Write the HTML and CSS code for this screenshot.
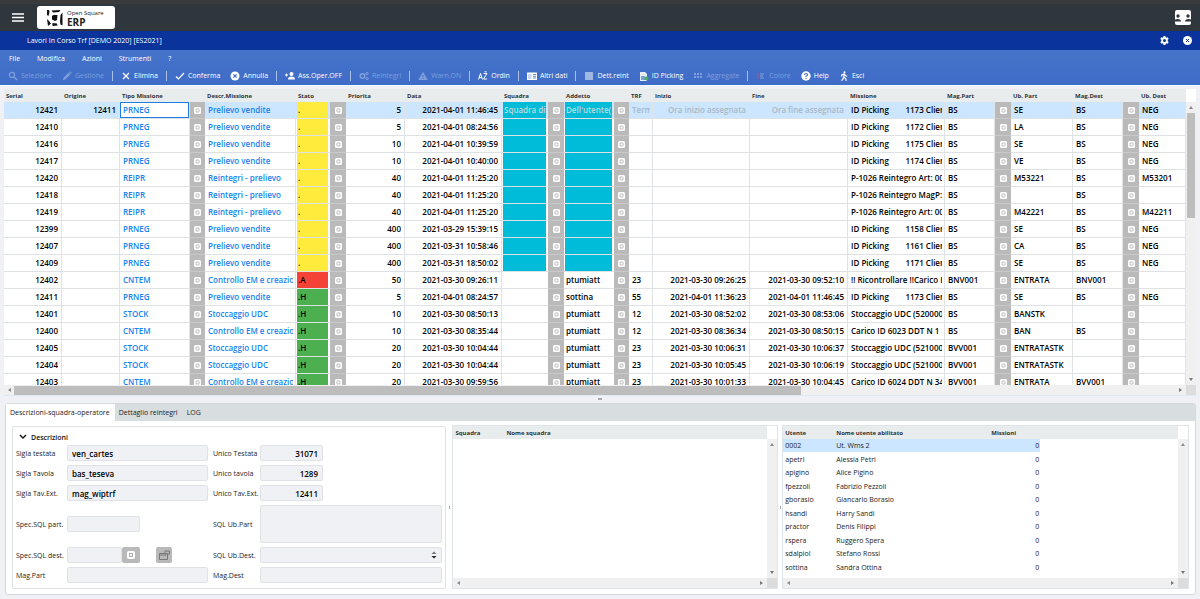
FILE: index.html
```html
<!DOCTYPE html>
<html lang="it">
<head>
  <meta charset="UTF-8" />
  <meta name="viewport" content="width=device-width, initial-scale=1.0" />
  <title>Lavori In Corso Trf</title>
  <link rel="stylesheet" href="styles.css">
</head>
<body>
  <!-- App bar -->
  <header class="app-bar">
    <button class="icon-btn" aria-label="Menu">
      <svg width="12" height="9" viewBox="0 0 12 9"><path d="M0 1h12M0 4.5h12M0 8h12" stroke="#fff" stroke-width="1.6"/></svg>
    </button>
    <div class="logo">
      <svg width="18" height="18" viewBox="0 0 18 18" fill="#111">
        <path d="M1 1h2L3.500 3 2.500 7 1 6zM1 10l2 2 2 2.500-3 2.500zM5.500 1.500L14.500 1 13 3l-6 .5zM6 7l1.500-1L11.500 6l-.5 5L9 12 6 10.500zM6.500 14l4.500.5.5 2-5 .5zM14.500 6l2-2.500v13l-2-1-.5-3z"/>
      </svg>
      <div class="logo-text">
        <span>Open Square</span>
        <strong>ERP</strong>
      </div>
    </div>
    <button class="icon-btn right" aria-label="Utenti">
      <svg width="18" height="16" viewBox="0 0 18 16">
        <rect x="1" width="16" height="15" rx="2" fill="#fff"/>
        <g fill="#2f373d"><circle cx="4" cy="6" r="1.7"/><circle cx="14" cy="6" r="1.7"/><path d="M0 11.5q0-2.5 3.500-2.500t3.500 2.500zM11 11.500q0-2.500 3.500-2.500t3.500 2.500z"/></g>
      </svg>
    </button>
  </header>

  <div class="title-bar">
    <h1>Lavori In Corso Trf [DEMO 2020] [ES2021]</h1>
    <button class="icon-btn" aria-label="Impostazioni">
      <svg width="9" height="9" viewBox="0 0 24 24" fill="#fff"><path fill-rule="evenodd" d="M9.500 0h5l.7 3.500 2 1.200L20.600 3.500l2.500 4.300L20.500 10.200v3.600l2.600 2.400-2.500 4.300-3.400-1.200-2 1.200-.7 3.500h-5l-.7-3.500-2-1.200-3.400 1.200L.9 16.200l2.600-2.400v-3.600L.9 7.800l2.500-4.300 3.400 1.200 2-1.200zM12 8a4 4 0 1 0 0 8 4 4 0 0 0 0-8z"/></svg>
    </button>
    <button class="icon-btn" aria-label="Chiudi">
      <svg width="9" height="9" viewBox="0 0 9 9"><circle cx="4.500" cy="4.500" r="4.500" fill="#fff"/><path d="M3 3l3 3M6 3L3 6" stroke="#0a349c" stroke-width="1"/></svg>
    </button>
  </div>

  <div class="command-bar">
    <nav class="menu">
      <button>File</button>
      <button>Modifica</button>
      <button>Azioni</button>
      <button>Strumenti</button>
      <button>?</button>
    </nav>
    <div class="toolbar">
      <button disabled><svg viewBox="0 0 10 10"><circle cx="4" cy="4" r="2.600" fill="none" stroke="currentColor" stroke-width="1.200"/><path d="M6 6l3 3" stroke="currentColor" stroke-width="1.400"/></svg>Selezione</button>
      <button disabled><svg viewBox="0 0 10 10" fill="currentColor"><path d="M1 9l.5-2.300L6.500 1.700l1.800 1.800L3.300 8.500zM7 1.200L8 .3l1.700 1.700-.9 1z"/></svg>Gestione</button>
      <i class="sep"></i>
      <button><svg viewBox="0 0 10 10"><path d="M2 2l6 6M8 2L2 8" stroke="currentColor" stroke-width="1.200"/></svg>Elimina</button>
      <i class="sep"></i>
      <button><svg viewBox="0 0 10 10"><path d="M1 5.500l2.500 2.500L9 2" fill="none" stroke="currentColor" stroke-width="1.200"/></svg>Conferma</button>
      <button><svg viewBox="0 0 10 10"><circle cx="5" cy="5" r="4.500" fill="currentColor"/><path d="M3.300 3.300l3.400 3.400M6.700 3.300L3.300 6.700" stroke="#426fc8" stroke-width="1.200"/></svg>Annulla</button>
      <i class="sep"></i>
      <button><svg viewBox="0 0 10 10" fill="currentColor"><circle cx="6.500" cy="3" r="2"/><path d="M3 8.500q0-3 3.500-3t3.500 3zM0 3.500h1V2.500h1v1h1v1H2v1H1v-1H0z"/></svg>Ass.Oper.OFF</button>
      <i class="sep"></i>
      <button disabled><svg viewBox="0 0 10 10" fill="none" stroke="currentColor"><circle cx="3.500" cy="5" r="2.300" stroke-width="1.500"/><circle cx="8" cy="2.500" r="1.200"/><circle cx="8" cy="7.500" r="1.200"/></svg>Reintegri</button>
      <i class="sep"></i>
      <button disabled><svg viewBox="0 0 10 10"><path d="M5 .8L9.700 9H.3z" fill="currentColor"/><path d="M5 4v2.300M5 7v1" stroke="#426fc8"/></svg>Warn.ON</button>
      <i class="sep"></i>
      <button><svg viewBox="0 0 10 10" fill="none" stroke="currentColor"><path d="M.5 8.500L2.500 2.500l2 6M1 6.500h3M5.500 2.500h3.500L5.500 8H9M6.500 .8h2"/></svg>Ordin</button>
      <i class="sep"></i>
      <button><svg viewBox="0 0 10 10"><rect y="1.500" width="10" height="7.500" fill="currentColor"/><path d="M6 3.500h3M6 5.300h3M6 7h3" stroke="#426fc8" stroke-width=".8"/><path d="M1 3h3.500v5H1z" fill="#c8d7f3"/></svg>Altri dati</button>
      <i class="sep"></i>
      <button><svg viewBox="0 0 10 10"><path d="M1 2h8M1 4h8M1 6h8M1 8h8" stroke="currentColor" stroke-width="1.200"/></svg>Dett.reint</button>
      <button><svg viewBox="0 0 10 10"><path d="M1 1h5l2 2v7H1z" fill="#e8eef8"/><path d="M2 5h4v4H2z" fill="#79a5d8"/><circle cx="7.500" cy="7.500" r="2" fill="#4caf50"/></svg>ID Picking</button>
      <button disabled><svg viewBox="0 0 10 10" fill="currentColor"><path d="M1 2h2v2H1zM4 2h2v2H4zM7 2h2v2H7zM1 5h2v2H1zM4 5h2v2H4zM7 5h2v2H7z"/></svg>Aggregate</button>
      <i class="sep"></i>
      <button disabled><svg viewBox="0 0 10 10"><path d="M1 3h2M1 5h2M1 7h2" stroke="#a05a8c"/><path d="M4 3h4M4 5h3M4 7h4" stroke="currentColor"/></svg>Colore</button>
      <button><svg viewBox="0 0 10 10"><circle cx="5" cy="5" r="4.700" fill="currentColor"/><path d="M3.500 4q0-1.500 1.500-1.500t1.500 1.200Q6.500 4.600 5 5.200V6M5 7v1" fill="none" stroke="#426fc8" stroke-width="1.100"/></svg>Help</button>
      <button><svg viewBox="0 0 10 10" fill="none" stroke="currentColor"><circle cx="5.500" cy="1.200" r="1" fill="currentColor" stroke="none"/><path d="M5.200 3L4.700 6l2 1.500.5 2.300M4.700 6L4 8 2.500 9.700M2.500 5.500L3 3.700 5.200 3l1.500 1.700 1.500.5" stroke-width="1.200"/></svg>Esci</button>
    </div>
  </div>

  <main>
    <!-- Missions grid -->
    <section class="grid-box missions">
      <div class="grid-view">
        <table class="mission-table">
          <colgroup id="missionCols"></colgroup>
          <thead><tr id="missionHead"></tr></thead>
          <tbody id="missionBody"></tbody>
        </table>
      </div>
      <div class="vscroll"><span class="up"></span><span class="thumb"></span><span class="down"></span></div>
      <div class="hscroll"><span class="left"></span><span class="thumb"></span><span class="right"></span></div>
      <div class="corner"></div>
    </section>

    <div class="splitter"></div>

    <!-- Detail panel -->
    <section class="detail">
      <div class="tabs" role="tablist">
        <button role="tab" aria-selected="true" class="active">Descrizioni-squadra-operatore</button>
        <button role="tab">Dettaglio reintegri</button>
        <button role="tab">LOG</button>
      </div>
      <div class="detail-body">
        <form class="group">
          <h2><svg width="8" height="6" viewBox="0 0 8 6"><path d="M1 1l3 3 3-3" fill="none" stroke="#111" stroke-width="1.400"/></svg>Descrizioni</h2>
          <div class="fields">
            <label for="siglaTestata">Sigla testata</label>
            <input id="siglaTestata" value="ven_cartes" readonly>
            <label for="unicoTestata" class="second">Unico Testata</label>
            <input id="unicoTestata" class="num" value="31071" readonly>

            <label for="siglaTavola">Sigla Tavola</label>
            <input id="siglaTavola" value="bas_teseva" readonly>
            <label for="unicoTavola" class="second">Unico tavola</label>
            <input id="unicoTavola" class="num" value="1289" readonly>

            <label for="siglaExt">Sigla Tav.Ext.</label>
            <input id="siglaExt" value="mag_wiptrf" readonly>
            <label for="unicoExt" class="second">Unico Tav.Ext.</label>
            <input id="unicoExt" class="num" value="12411" readonly>

            <label for="specPart">Spec.SQL part.</label>
            <input id="specPart" class="short" readonly>
            <label for="sqlPart" class="second">SQL Ub.Part</label>
            <textarea id="sqlPart" class="tall" readonly></textarea>

            <label for="specDest">Spec.SQL dest.</label>
            <div class="with-buttons">
              <input id="specDest" readonly>
              <button type="button" class="lookup" aria-label="Cerca"><svg width="8" height="8" viewBox="0 0 8 8"><rect width="8" height="8" rx="2" fill="#fff"/><rect x="2.500" y="2.500" width="3" height="3" fill="none" stroke="#aaa"/></svg></button>
              <button type="button" class="open" aria-label="Apri"><svg width="11" height="10" viewBox="0 0 11 10" fill="none" stroke="#777"><path d="M.5 3.500h8v6h-8zM.5 5h7M6 3V1h4.500v3H9"/></svg></button>
            </div>
            <label for="sqlDest" class="second">SQL Ub.Dest.</label>
            <div class="spin-box">
              <textarea id="sqlDest" readonly></textarea>
              <svg width="6" height="8" viewBox="0 0 6 8"><path d="M.5 3L3 .5 5.500 3z" fill="#777"/><path d="M.5 5L3 7.500 5.500 5z" fill="#222"/></svg>
            </div>

            <label for="magPart">Mag.Part</label>
            <input id="magPart" readonly>
            <label for="magDest" class="second">Mag.Dest</label>
            <input id="magDest" readonly>
          </div>
        </form>
        <div class="vsplit"></div>
        <div class="grid-box squads">
          <div class="grid-view">
            <table class="plain-table">
              <colgroup><col class="w-code"><col class="w-squad"><col></colgroup>
              <thead><tr><th>Squadra</th><th>Nome squadra</th><th></th></tr></thead>
              <tbody></tbody>
            </table>
          </div>
          <div class="vscroll"><span class="up"></span><span class="down"></span></div>
          <div class="hscroll"><span class="left"></span><span class="right"></span></div>
          <div class="corner"></div>
        </div>
        <div class="vsplit narrow"></div>
        <div class="grid-box users">
          <div class="grid-view">
            <table class="plain-table">
              <colgroup><col class="w-code"><col class="w-squad"><col class="w-count"><col></colgroup>
              <thead><tr><th>Utente</th><th>Nome utente abilitato</th><th>Missioni</th><th></th></tr></thead>
              <tbody id="userBody"></tbody>
            </table>
          </div>
          <div class="vscroll"><span class="up"></span><span class="down"></span></div>
          <div class="hscroll"><span class="left"></span><span class="right"></span></div>
          <div class="corner"></div>
        </div>
      </div>
    </section>
  </main>

  <script>
    // title, width, type
    const columns = [
      ["Serial", 58, "num"], ["Origine", 58, "num"], ["Tipo Missione", 70, "link"], ["", 15, "lookup"],
      ["Descr.Missione", 91, "link"], ["Stato", 34, "state"], ["", 16, "lookup"], ["Priorita", 59, "num"],
      ["Data", 97, "num"], ["Squadra", 46, "team"], ["", 16, "lookup"], ["Addetto", 50, "team"],
      ["", 15, "lookup"], ["TRF", 24, "text"], ["Inizio", 97, "num"], ["Fine", 98, "num"],
      ["Missione", 97, "text"], ["Mag.Part", 50, "text"], ["", 16, "lookup"], ["Ub. Part", 62, "text"],
      ["Mag.Dest", 50, "text"], ["", 16, "lookup"], ["Ub. Dest", 0, "text"]
    ];

    const pick = n => "ID Picking" + " ".repeat(8) + n + " Clien";

    // serial, origine, tipo, stato, priorita, data, addetto, trf, inizio, fine, missione, mag, ub, mag dest, ub dest
    const missions = [
      [12421, 12411, "PRNEG", ".", 5, "2021-04-01 11:46:45", "", "", "", "", pick(1173), "BS", "SE", "BS", "NEG"],
      [12410, "", "PRNEG", ".", 5, "2021-04-01 08:24:56", "", "", "", "", pick(1172), "BS", "LA", "BS", "NEG"],
      [12416, "", "PRNEG", ".", 10, "2021-04-01 10:39:59", "", "", "", "", pick(1175), "BS", "SE", "BS", "NEG"],
      [12417, "", "PRNEG", ".", 10, "2021-04-01 10:40:00", "", "", "", "", pick(1174), "BS", "VE", "BS", "NEG"],
      [12420, "", "REIPR", ".", 40, "2021-04-01 11:25:20", "", "", "", "", "P-1026 Reintegro Art: 00", "BS", "M53221", "BS", "M53201"],
      [12418, "", "REIPR", ".", 40, "2021-04-01 11:25:20", "", "", "", "", "P-1026 Reintegro MagP:", "BS", "", "BS", ""],
      [12419, "", "REIPR", ".", 40, "2021-04-01 11:25:20", "", "", "", "", "P-1026 Reintegro Art: 00", "BS", "M42221", "BS", "M42211"],
      [12399, "", "PRNEG", ".", 400, "2021-03-29 15:39:15", "", "", "", "", pick(1158), "BS", "SE", "BS", "NEG"],
      [12407, "", "PRNEG", ".", 400, "2021-03-31 10:58:46", "", "", "", "", pick(1161), "BS", "CA", "BS", "NEG"],
      [12409, "", "PRNEG", ".", 400, "2021-03-31 18:50:02", "", "", "", "", pick(1171), "BS", "SE", "BS", "NEG"],
      [12402, "", "CNTEM", ".A", 50, "2021-03-30 09:26:11", "ptumiatt", 23, "2021-03-30 09:26:25", "2021-03-30 09:52:10", "!! Ricontrollare !!Carico I", "BNV001", "ENTRATA", "BNV001", ""],
      [12411, "", "PRNEG", ".H", 5, "2021-04-01 08:24:57", "sottina", 55, "2021-04-01 11:36:23", "2021-04-01 11:46:45", pick(1173), "BS", "SE", "BS", "NEG"],
      [12401, "", "STOCK", ".H", 10, "2021-03-30 08:50:13", "ptumiatt", 12, "2021-03-30 08:52:02", "2021-03-30 08:53:06", "Stoccaggio UDC (520000", "BS", "BANSTK", "", ""],
      [12400, "", "CNTEM", ".H", 10, "2021-03-30 08:35:44", "ptumiatt", 12, "2021-03-30 08:36:34", "2021-03-30 08:50:15", "Carico ID 6023 DDT N 1 I", "BS", "BAN", "BS", ""],
      [12405, "", "STOCK", ".H", 20, "2021-03-30 10:04:44", "ptumiatt", 23, "2021-03-30 10:06:31", "2021-03-30 10:06:37", "Stoccaggio UDC (521000", "BVV001", "ENTRATASTK", "", ""],
      [12404, "", "STOCK", ".H", 20, "2021-03-30 10:04:44", "ptumiatt", 23, "2021-03-30 10:05:45", "2021-03-30 10:06:19", "Stoccaggio UDC (521000", "BVV001", "ENTRATASTK", "", ""],
      [12403, "", "CNTEM", ".H", 20, "2021-03-30 09:59:56", "ptumiatt", 23, "2021-03-30 10:01:33", "2021-03-30 10:04:45", "Carico ID 6024 DDT N 34", "BVV001", "ENTRATA", "BVV001", ""]
    ];

    const descriptions = {
      PRNEG: "Prelievo vendite",
      REIPR: "Reintegri - prelievo",
      CNTEM: "Controllo EM e creazio",
      STOCK: "Stoccaggio UDC"
    };
    const stateClass = { ".": "yellow", ".A": "red", ".H": "green" };
    const hints = { 9: "Squadra di", 11: "Dell'utente(", 13: "Term", 14: "Ora inizio assegnata", 15: "Ora fine assegnata" };

    const lookupIcon = '<button class="cell-lookup" aria-label="Cerca"><svg width="7" height="7" viewBox="0 0 7 7"><rect width="7" height="7" rx="1.500" fill="#fff"/><path d="M2 5V2h3v3M2 5h3" fill="none" stroke="#b4b4b4" stroke-width=".8"/></svg></button>';

    const cols = document.getElementById("missionCols");
    const head = document.getElementById("missionHead");
    columns.forEach(([title, width]) => {
      const col = document.createElement("col");
      if (width) col.style.width = width + "px";
      cols.appendChild(col);
      head.insertAdjacentHTML("beforeend", `<th>${title}</th>`);
    });

    const body = document.getElementById("missionBody");
    missions.forEach((m, row) => {
      const [serial, origin, type, state, priority, date, operator, trf, start, end, text, mag, ub, magDest, ubDest] = m;
      const values = [serial, origin, type, null, descriptions[type], state, null, priority, date, "", null,
        operator, null, trf, start, end, text, mag, null, ub, magDest, null, ubDest];
      const tr = document.createElement("tr");
      if (row === 0) tr.className = "selected";
      values.forEach((value, i) => {
        const td = document.createElement("td");
        td.className = columns[i][2];
        if (value === null) {
          td.innerHTML = lookupIcon;
        } else if (row === 0 && i === 2) {
          td.innerHTML = `<input class="cell-input" aria-label="Tipo Missione" value="${value}">`;
        } else {
          const div = document.createElement("div");
          div.className = "cell";
          div.textContent = value;
          if (i === 5) div.classList.add(stateClass[value]);
          if ((i === 9 || i === 11) && state === ".") div.classList.add("cyan");
          if (row === 0 && hints[i]) {
            div.textContent = hints[i];
            div.classList.add("hint");
          }
          td.appendChild(div);
        }
        tr.appendChild(td);
      });
      body.appendChild(tr);
    });

    const users = [
      ["0002", "Ut. Wms 2"], ["apetri", "Alessia Petri"], ["apigino", "Alice Pigino"], ["fpezzoli", "Fabrizio Pezzoli"],
      ["gborasio", "Giancarlo Borasio"], ["hsandi", "Harry Sandi"], ["practor", "Denis Filippi"],
      ["rspera", "Ruggero Spera"], ["sdalpiol", "Stefano Rossi"], ["sottina", "Sandra Ottina"]
    ];
    const userBody = document.getElementById("userBody");
    users.forEach(([code, name], i) => {
      userBody.insertAdjacentHTML("beforeend",
        `<tr${i === 0 ? ' class="selected"' : ""}><td>${code}</td><td>${name}</td><td class="num">0</td></tr>`);
    });
  </script>
</body>
</html>
```
FILE: styles.css
```css
* {
  box-sizing: border-box;
}

body {
  margin: 0;
  min-height: 100vh;
  display: flex;
  flex-direction: column;
  font-family: "Open Sans", "Noto Sans", sans-serif;
  font-size: 7px;
  color: #222;
  background: #f0f1f5;
}

button {
  font: inherit;
  color: inherit;
  background: none;
  border: 0;
  padding: 0;
  cursor: pointer;
}

svg {
  display: block;
  flex: none;
}

/* top bars */
.app-bar {
  display: flex;
  align-items: center;
  height: 31px;
  padding: 0 8px 0 12px;
  border-top: 4px solid #3b3b3b;
  background: #2f373d;
}

.icon-btn.right {
  margin-left: auto;
}

.logo {
  display: flex;
  align-items: center;
  gap: 3px;
  width: 78px;
  height: 23px;
  margin-left: 13px;
  padding-left: 9px;
  border-radius: 3px;
  background: #fff;
  color: #222;
}

.logo-text {
  display: flex;
  flex-direction: column;
  font-size: 6px;
  line-height: 8px;
}

.logo-text strong {
  font-size: 10px;
  line-height: 10px;
}

.title-bar {
  display: flex;
  align-items: center;
  gap: 14px;
  height: 19px;
  padding: 0 8px 0 27px;
  background: #0a349c;
  color: #fff;
}

.title-bar h1 {
  flex: 1;
  margin: 0;
  font-size: 7px;
  font-weight: 400;
}

.command-bar {
  height: 35px;
  background: linear-gradient(#4674ca, #3e6cc7);
  color: #fff;
}

.menu {
  display: flex;
  gap: 17px;
  height: 16px;
  padding-left: 9px;
}

.toolbar {
  display: flex;
  align-items: center;
  gap: 8px;
  height: 19px;
  padding-left: 8px;
}

.toolbar button {
  display: flex;
  align-items: center;
  gap: 3px;
}

.toolbar svg {
  width: 10px;
  height: 10px;
}

.toolbar button + button {
  margin-left: 2px;
}

.toolbar button:disabled {
  color: #7f9fdc;
}

.sep {
  width: 1px;
  height: 10px;
  background: #a9bfe8;
}

main {
  flex: 1;
  display: flex;
  flex-direction: column;
  padding: 3px 4px 4px;
  border-top: 1px solid #fff;
}

/* grids */
.grid-box {
  display: grid;
  grid-template-columns: minmax(0, 1fr) 10px;
  grid-template-rows: minmax(0, 1fr) 10px;
  background: #fff;
}

.grid-view {
  overflow: hidden;
}

table {
  width: 100%;
  table-layout: fixed;
  border-collapse: separate;
  border-spacing: 0;
}

th {
  height: 13px;
  padding: 0 0 0 2px;
  overflow: hidden;
  font-size: 6px;
  line-height: 12px;
  font-weight: 700;
  text-align: left;
  white-space: nowrap;
  color: #333;
  background: #e8ecec;
}

.missions {
  height: 307px;
  border-bottom: 1px solid #dbe8f5;
}

.mission-table td {
  height: 17px;
  padding: 0;
  border-right: 1px solid #e0e3e6;
  border-bottom: 1px solid #dfe2e5;
  font-size: 8px;
  line-height: 16px;
  font-weight: 600;
  color: #000;
}

.cell {
  height: 16px;
  margin: 0 2px 0 3px;
  overflow: hidden;
  white-space: pre;
}

.num .cell {
  text-align: right;
}

.mission-table .num .cell {
  margin-right: 3px;
}

.link .cell {
  color: #1583f0;
}

.mission-table .state,
.mission-table .team {
  border-right: 0;
}

.state .cell,
.team .cell {
  margin: 0 2px 0 1px;
  padding-left: 1px;
}

.mission-table .lookup {
  border-right: 0;
  border-bottom-color: #c9c9c9;
  background: #bababa;
}

.cell-lookup {
  display: flex;
  align-items: center;
  justify-content: center;
  width: 100%;
  height: 16px;
}

.cell-input {
  display: block;
  width: 100%;
  height: 16px;
  padding: 0 2px;
  border: 1px solid #1f7fe0;
  background: #fff;
  font: inherit;
  color: #1583f0;
}

.selected td {
  background: #cce6ff;
}

.yellow {
  background: #ffeb3b;
}

.red {
  background: #f44336;
}

.green {
  background: #4caf50;
}

.cyan {
  background: #00bcd8;
}

.mission-table .hint {
  color: #a9b9c6;
}

.mission-table .cyan.hint {
  color: #bfd9dc;
}

/* scrollbars */
.vscroll,
.hscroll {
  display: flex;
  align-items: center;
  background: #f0f0f0;
}

.vscroll {
  flex-direction: column;
  margin-top: 13px;
  padding: 4px 0;
}

.hscroll {
  padding: 0 4px;
}

.corner {
  background: #dcdcdc;
}

.up,
.down,
.left,
.right {
  flex: none;
}

.vscroll span,
.hscroll span {
  border: 2px solid transparent;
}

.vscroll .up {
  border-bottom: 3px solid #888;
  border-top: 0;
}

.vscroll .down {
  margin-top: auto;
  border-top: 3px solid #777;
  border-bottom: 0;
}

.hscroll .left {
  border-right: 3px solid #888;
  border-left: 0;
}

.hscroll .right {
  margin-left: auto;
  border-left: 3px solid #777;
  border-right: 0;
}

.vscroll .thumb {
  width: 8px;
  height: 38%;
  margin-top: 4px;
  border: 0;
  background: #bdbdbd;
}

.hscroll .thumb {
  width: 67%;
  height: 9px;
  margin-left: 3px;
  border: 0;
  background: #bdbdbd;
}

.splitter {
  display: flex;
  justify-content: center;
  height: 7px;
  padding-top: 2px;
}

.splitter::before {
  content: "";
  width: 4px;
  height: 2px;
  background: #aaa;
}

/* detail panel */
.detail {
  flex: 1;
  display: flex;
  flex-direction: column;
  margin-left: 1px;
  border: 1px solid #d5d8dd;
  border-radius: 3px;
  background: #fff;
}

.tabs {
  display: flex;
  height: 17px;
  background: #d8dde0;
}

.tabs button {
  padding: 0 5px 0 4px;
}

.tabs .active {
  background: #fff;
}

.detail-body {
  flex: 1;
  display: flex;
  padding: 4px 6px 5px;
}

.group {
  flex: 432 1 0;
  min-width: 0;
  margin-top: 1px;
  padding: 4px 3px 3px;
  border: 1px solid #dfe1e5;
  border-radius: 2px;
}

.group h2 {
  display: flex;
  align-items: center;
  gap: 4px;
  height: 12px;
  margin: 0 0 2px;
  padding-left: 3px;
  font-size: 7px;
  font-weight: 600;
  color: #111;
}

.fields {
  display: grid;
  grid-template-columns: 51px 141px 52px minmax(0, 1fr);
  row-gap: 4px;
  align-items: center;
}

.fields label {
  white-space: nowrap;
}

.fields .second {
  padding-left: 5px;
}

.fields input,
.fields textarea {
  display: block;
  width: 100%;
  height: 16px;
  padding: 0 4px;
  border: 1px solid #e0e2e8;
  border-radius: 2px;
  background: #f0f1f5;
  font: 600 8px "Open Sans", "Noto Sans", sans-serif;
  color: #000;
  resize: none;
}

.fields .num {
  width: 63px;
  text-align: right;
}

.fields .short {
  width: 73px;
}

.fields .tall {
  height: 38px;
}

.with-buttons {
  display: flex;
}

.fields .with-buttons input {
  width: 55px;
}

.with-buttons button {
  display: flex;
  align-items: center;
  justify-content: center;
  height: 16px;
  border-radius: 2px;
  background: #b9b9b9;
}

.with-buttons .lookup {
  width: 18px;
}

.with-buttons .open {
  width: 16px;
  margin-left: 16px;
}

.spin-box {
  display: flex;
  align-items: center;
  padding-right: 4px;
  border: 1px solid #e0e2e8;
  border-radius: 2px;
  background: #f0f1f5;
}

.fields .spin-box textarea {
  height: 14px;
  border: 0;
  overflow: hidden;
}

.vsplit {
  display: flex;
  align-items: center;
  justify-content: center;
  width: 6px;
}

.vsplit.narrow {
  width: 4px;
}

.vsplit::before {
  content: "";
  width: 1px;
  height: 3px;
  background: #aaa;
}

.squads,
.users {
  min-width: 0;
  border: 1px solid #dfe4e8;
}

.squads {
  flex: 328 1 0;
}

.users {
  flex: 410 1 0;
}

.w-code {
  width: 51px;
}

.w-squad {
  width: 155px;
}

.w-count {
  width: 51px;
}

.plain-table td {
  height: 13px;
  padding: 0 1px 0 2px;
  line-height: 13px;
  white-space: nowrap;
}

.plain-table tr:nth-child(even) td {
  height: 14px;
}

.plain-table .num {
  text-align: right;
}
```
